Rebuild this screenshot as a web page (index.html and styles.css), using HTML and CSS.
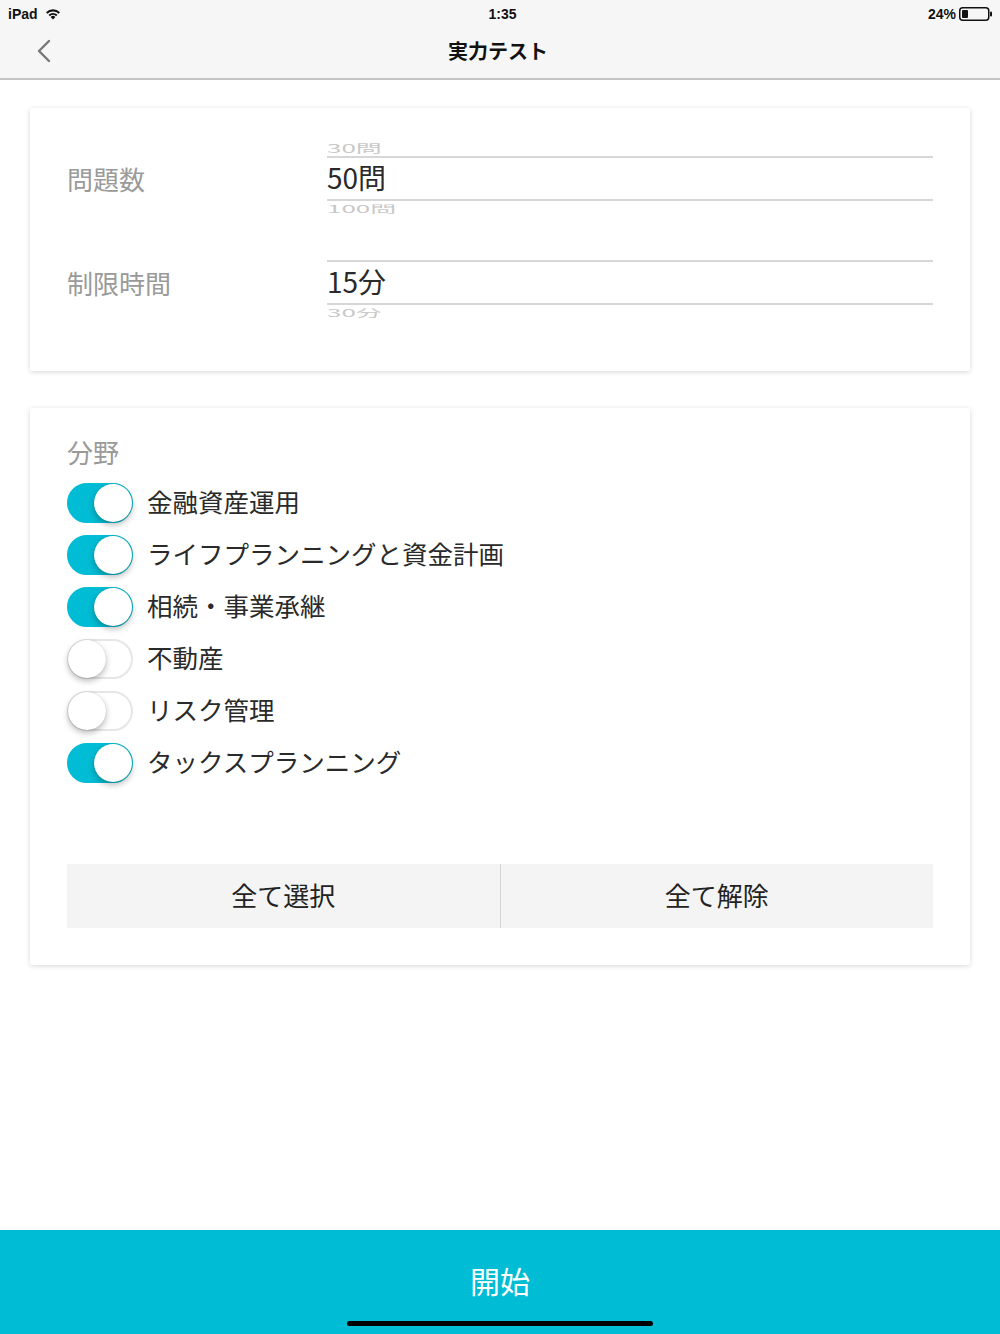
FILE: index.html
```html
<!DOCTYPE html>
<html lang="ja">
<head>
    <meta charset="UTF-8">
    <meta name="viewport" content="width=device-width, initial-scale=1.0">
    <title>実力テスト</title>
    <link rel="stylesheet" href="styles.css">
</head>
<body>
    <div class="app">
        <div class="status-bar">
            <div class="status-left">
                <span>iPad</span>
                <svg class="wifi" width="16" height="12" viewBox="0 0 16 12">
                    <path d="M8 11.5 L5.6 8.9 A3.6 3.6 0 0 1 10.4 8.9 Z" fill="#111"/>
                    <path d="M3.5 6.8 A6.5 6.5 0 0 1 12.5 6.8 L11.1 8.3 A4.5 4.5 0 0 0 4.9 8.3 Z" fill="#111"/>
                    <path d="M1 4.2 A10 10 0 0 1 15 4.2 L13.6 5.7 A8 8 0 0 0 2.4 5.7 Z" fill="#111"/>
                </svg>
            </div>
            <div class="status-time">1:35</div>
            <div class="status-right">
                <span>24%</span>
                <svg class="battery" width="34" height="14" viewBox="0 0 34 14">
                    <rect x="0.75" y="0.75" width="29" height="12.5" rx="3" fill="none" stroke="#111" stroke-width="1.5"/>
                    <rect x="3" y="3" width="6" height="8" rx="1" fill="#111"/>
                    <rect x="31" y="4.5" width="2" height="5" rx="1" fill="#111"/>
                </svg>
            </div>
        </div>

        <header class="nav-bar">
            <a class="back-btn" href="#">
                <svg width="16" height="24" viewBox="0 0 16 24">
                    <path d="M13 2 L3 12 L13 22" fill="none" stroke="#777" stroke-width="2.4" stroke-linecap="round" stroke-linejoin="round"/>
                </svg>
            </a>
            <h1>実力テスト</h1>
            <span class="nav-spacer"></span>
        </header>

        <main class="content">
            <section class="card settings-card">
                <div class="setting-row">
                    <div class="setting-label">問題数</div>
                    <div class="picker">
                        <div class="picker-ghost top"><span>30問</span></div>
                        <div class="picker-selected">50問</div>
                        <div class="picker-ghost bottom"><span>100問</span></div>
                    </div>
                </div>
                <div class="setting-row">
                    <div class="setting-label">制限時間</div>
                    <div class="picker">
                        <div class="picker-ghost top"></div>
                        <div class="picker-selected">15分</div>
                        <div class="picker-ghost bottom"><span>30分</span></div>
                    </div>
                </div>
            </section>

            <section class="card fields-card">
                <div class="fields-title">分野</div>
                <ul class="toggle-list">
                    <li><span class="toggle on"></span><span class="toggle-label">金融資産運用</span></li>
                    <li><span class="toggle on"></span><span class="toggle-label">ライフプランニングと資金計画</span></li>
                    <li><span class="toggle on"></span><span class="toggle-label">相続・事業承継</span></li>
                    <li><span class="toggle"></span><span class="toggle-label">不動産</span></li>
                    <li><span class="toggle"></span><span class="toggle-label">リスク管理</span></li>
                    <li><span class="toggle on"></span><span class="toggle-label">タックスプランニング</span></li>
                </ul>
                <div class="select-buttons">
                    <button>全て選択</button>
                    <button>全て解除</button>
                </div>
            </section>
        </main>

        <footer class="start-bar">
            <button class="start-btn">開始</button>
            <div class="home-indicator"></div>
        </footer>
    </div>
</body>
</html>
```

FILE: styles.css
```css
* {
    box-sizing: border-box;
    margin: 0;
    padding: 0;
}

body {
    font-family: "Noto Sans CJK JP", "Noto Sans", sans-serif;
    background: #fff;
    color: #333;
}

.app {
    display: flex;
    flex-direction: column;
    min-height: 100vh;
}

/* status bar */
.status-bar {
    display: grid;
    grid-template-columns: 1fr auto 1fr;
    align-items: center;
    height: 28px;
    padding: 0 7px 0 8px;
    background: #f6f6f6;
    font-family: "Liberation Sans", "Noto Sans", sans-serif;
    font-size: 14px;
    font-weight: bold;
    color: #111;
}

.status-left {
    display: flex;
    align-items: center;
    gap: 7px;
}

.status-time {
    text-align: center;
    padding-left: 4px;
}

.status-right {
    display: flex;
    align-items: center;
    justify-content: flex-end;
    gap: 3px;
}

/* nav bar */
.nav-bar {
    display: flex;
    align-items: center;
    justify-content: space-between;
    height: 52px;
    padding: 0 0 6px 36px;
    background: #f6f6f6;
    border-bottom: 2px solid #c4c4c4;
}

.back-btn {
    display: flex;
    width: 60px;
    margin-top: 2px;
}

.nav-bar h1 {
    font-size: 20px;
    font-weight: bold;
    color: #111;
    margin-right: 4px;
}

.nav-spacer {
    width: 96px;
}

/* content */
.content {
    flex: 1;
    padding: 28px 30px;
    display: flex;
    flex-direction: column;
    gap: 37px;
}

.card {
    background: #fff;
    border-radius: 2px;
    box-shadow: 0 1px 5px rgba(0, 0, 0, 0.16);
}

.settings-card {
    padding: 22px 37px 33px;
}

.setting-row {
    display: flex;
    align-items: center;
    height: 104px;
}

.setting-label {
    width: 260px;
    font-size: 26px;
    color: #9a9a9a;
    padding-bottom: 8px;
}

.picker {
    flex: 1;
    display: flex;
    flex-direction: column;
}

.picker-ghost {
    color: #c8c8c8;
    font-size: 26px;
    display: flex;
}

.picker-ghost.top {
    height: 27px;
    align-items: flex-end;
    padding-bottom: 2px;
}

.picker-ghost.bottom {
    height: 34px;
    align-items: flex-start;
    padding-top: 3px;
}

.picker-ghost span {
    display: block;
    line-height: 26px;
    transform-origin: left center;
}

.picker-ghost.top span {
    transform: scaleY(0.45);
    margin-bottom: -7px;
}

.picker-ghost.bottom span {
    transform: scaleY(0.4);
    margin-top: -8px;
}

.picker-selected {
    height: 45px;
    display: flex;
    align-items: center;
    border-top: 2px solid #d6d6d6;
    border-bottom: 2px solid #d6d6d6;
    font-size: 28px;
    color: #2a2a2a;
    padding-bottom: 4px;
}

/* fields */
.fields-card {
    padding: 28px 37px 37px;
}

.fields-title {
    font-size: 26px;
    line-height: 32px;
    color: #9a9a9a;
    margin-bottom: 9px;
}

.toggle-list {
    list-style: none;
    margin-bottom: 75px;
}

.toggle-list li {
    display: flex;
    align-items: center;
    height: 52px;
}

.toggle {
    position: relative;
    width: 66px;
    height: 40px;
    border-radius: 20px;
    background: #fff;
    border: 2px solid #e6e6e6;
    margin-right: 14px;
    flex-shrink: 0;
}

.toggle::after {
    content: "";
    position: absolute;
    top: -1px;
    left: -1px;
    width: 38px;
    height: 38px;
    border-radius: 50%;
    background: #fff;
    box-shadow: 0 3px 6px rgba(0, 0, 0, 0.28), 0 0 1px rgba(0, 0, 0, 0.2);
}

.toggle.on {
    background: #00bcd4;
    border-color: #00bcd4;
}

.toggle.on::after {
    left: auto;
    right: -1px;
}

.toggle-label {
    font-size: 25.5px;
    line-height: 36px;
    color: #2a2a2a;
    padding-bottom: 4px;
}

.select-buttons {
    display: flex;
    height: 64px;
    background: #f4f4f4;
}

.select-buttons button {
    flex: 1;
    border: none;
    background: none;
    font-family: inherit;
    font-size: 26px;
    color: #222;
    padding-bottom: 3px;
}

.select-buttons button + button {
    border-left: 1px solid #d4d4d4;
}

/* bottom bar */
.start-bar {
    height: 104px;
    background: #00bcd4;
    display: flex;
    flex-direction: column;
    align-items: center;
    padding-top: 30px;
}

.start-btn {
    border: none;
    background: none;
    font-family: inherit;
    font-size: 30px;
    line-height: 40px;
    color: #fff;
}

.home-indicator {
    margin-top: 21px;
    width: 306px;
    height: 5px;
    border-radius: 3px;
    background: #000;
}
```
